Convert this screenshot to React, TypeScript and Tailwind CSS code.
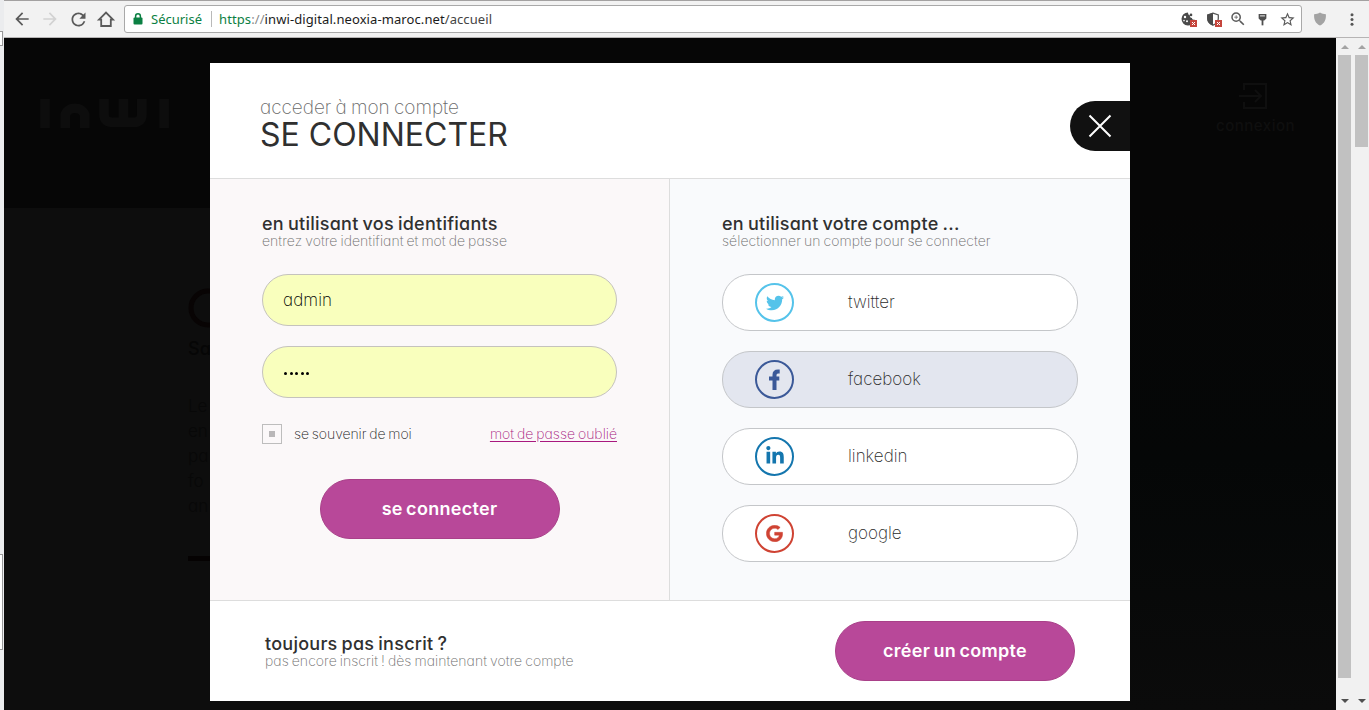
import type { ReactNode } from "react";
import { MdArrowBack, MdArrowForward, MdRefresh, MdStarBorder, MdZoomIn } from "react-icons/md";
import { FaGoogle, FaLinkedinIn, FaTwitter } from "react-icons/fa";

function BlockedBadge() {
  return (
    <svg className="absolute -right-[2px] -bottom-[1px] h-[7px] w-[7px]" viewBox="0 0 7 7">
      <rect width="7" height="7" fill="#c5453c" />
      <path d="M2 2l3 3M5 2l-3 3" stroke="#fff" strokeWidth="1" />
    </svg>
  );
}

function BrowserBar() {
  return (
    <header className="flex h-[38px] shrink-0 items-center border-t border-b border-t-[#a3a1a1] border-b-[#b6b4b4] bg-[#f2f2f2] pl-[8px]">
      <div className="flex items-center gap-[8px] text-[#5a5a5a]">
        <MdArrowBack className="h-5 w-5" />
        <MdArrowForward className="h-5 w-5 text-[#d2d2d2]" />
        <MdRefresh className="h-[21px] w-[21px]" />
        <svg className="-ml-[1px] h-5 w-5" viewBox="0 0 20 20" fill="none" stroke="currentColor" strokeWidth="1.8">
          <path d="M3 10.600 10 3.600l7 7h-2.200V17H5.200v-6.400z" strokeLinejoin="miter" />
        </svg>
      </div>
      <div className="ml-[8px] flex h-[28px] w-[1178px] shrink-0 items-center rounded-[3px] border border-[#a9a9a9] bg-white pr-px pl-[8px] font-['Noto_Sans',sans-serif] text-[13px]">
        <svg className="h-3 w-[10px]" viewBox="0 0 10 12">
          <rect x="0.5" y="4.5" width="9" height="7" rx="1" fill="#0b8043" />
          <path d="M2.600 5V3.200a2.400 2.400 0 0 1 4.800 0V5" fill="none" stroke="#0b8043" strokeWidth="1.5" />
        </svg>
        <span className="ml-[8px] pt-px text-[#0b8043]">Sécurisé</span>
        <span className="ml-[9px] h-4 w-px bg-[#b9b9b9]" />
        <span className="ml-[7px] pt-px tracking-[0.09px] whitespace-nowrap text-[#1b1b1b]">
          <span className="text-[#0b8043]">https</span>
          <span className="text-[#8a8a8a]">://</span>inwi-digital.neoxia-maroc.net<span className="text-[#444]">/accueil</span>
        </span>
        <div className="ml-auto grid grid-cols-[repeat(5,25px)] place-items-center text-[#5a5a5a]">
          <span className="relative h-[14px] w-[14px]">
            <svg className="h-[14px] w-[14px]" viewBox="0 0 14 14">
              <path d="M7 .5a6.500 6.500 0 1 0 6.500 7C12 8 11 7.300 11 6 9.500 6 8.500 5 9 3.500 7.600 3 7 2 7 .5z" fill="#4a4a4a" />
              <circle cx="10" cy="2.900" r="1.300" fill="#4a4a4a" />
              <circle cx="4" cy="5" r="1.200" fill="#fff" />
              <circle cx="6" cy="9.200" r="1" fill="#fff" />
              <circle cx="3" cy="8.600" r=".8" fill="#fff" />
            </svg>
            <BlockedBadge />
          </span>
          <span className="relative h-[14px] w-[14px]">
            <svg className="h-[14px] w-[14px]" viewBox="0 0 14 14">
              <path d="M7 1.200 12.300 3v3.600c0 3-2.200 5.400-5.300 6.600-3.100-1.200-5.300-3.600-5.300-6.600V3z" fill="none" stroke="#5a5a5a" strokeWidth="1.300" />
              <path d="M7 .8 1.200 2.800v3.800c0 3.300 2.400 5.800 5.800 7z" fill="#4a4a4a" />
            </svg>
            <BlockedBadge />
          </span>
          <MdZoomIn className="h-[18px] w-[18px]" />
          <svg className="h-[13px] w-[9px]" viewBox="0 0 10 14">
            <path d="M.7 1h8.600v5L7 8H3L.7 6z" fill="#4f4f4f" />
            <path d="M2.300 3h5.400" stroke="#fff" strokeWidth="1" />
            <path d="M5 7.500v6" stroke="#4f4f4f" strokeWidth="2" />
          </svg>
          <MdStarBorder className="h-[17px] w-[17px]" />
        </div>
      </div>
      <svg className="ml-[11px] h-[14px] w-[14px]" viewBox="0 0 14 15">
        <path d="M7 .5c1.800 1.200 4 1.700 6.300 1.800C13.700 8 12 12 7 14.500 2 12 .3 8 .7 2.300 3 2.200 5.200 1.700 7 .5z" fill="#a3a3a3" />
      </svg>
      <svg className="ml-[22px] h-[15px] w-[6px]" viewBox="0 0 6 15" fill="#555">
        <circle cx="3" cy="2.700" r="1.500" />
        <circle cx="3" cy="7.500" r="1.500" />
        <circle cx="3" cy="12.300" r="1.500" />
      </svg>
    </header>
  );
}

function Arrow({ down = false }: { down?: boolean }) {
  return (
    <svg className="h-[4px] w-[8px] shrink-0" viewBox="0 0 8 4">
      <path d={down ? "M0 0h8L4 4z" : "M0 4h8L4 0z"} fill={down ? "#505050" : "#a3a3a3"} />
    </svg>
  );
}

function Scrollbars() {
  return (
    <div className="flex w-[33px] shrink-0 gap-[4px] bg-[#f1f1f1] pl-[2px]">
      <div className="flex w-[13px] flex-col items-center pt-[7px] pb-[7px]">
        <Arrow />
        <div className="mt-[6px] mb-auto h-[623px] w-[13px] shrink-0 bg-[#c1c1c1]" />
        <Arrow down />
      </div>
      <div className="flex w-[13px] flex-col items-center pt-[7px] pb-[7px]">
        <Arrow />
        <div className="mt-[6px] mb-auto h-[92px] w-[13px] shrink-0 bg-[#c1c1c1]" />
        <Arrow down />
      </div>
    </div>
  );
}

function PageBehind() {
  return (
    <div className="flex h-full flex-col bg-[#060606]">
      <div className="flex h-[170px] shrink-0 items-start justify-between pt-[45px] pr-[41px] pl-[33px]">
        <svg className="mt-[15px] h-[31px] w-[136px]" viewBox="0 0 136 32" fill="none" stroke="#0d0d0d" strokeWidth="10">
          <path d="M6 1v30M27 31V17a11 11 0 0 1 20 0v14M67 1v16q0 8 9 8h22q8 0 8-8V1M87 1v22M129 1v30" />
        </svg>
        <div className="flex flex-col items-center text-[#0f0f0f]">
          <svg className="h-[26px] w-[36px]" viewBox="0 0 36 26" fill="none" stroke="currentColor" strokeWidth="2">
            <path d="M6 7V1h22v24H6v-6M1 13h22M17 7l6 6-6 6" />
          </svg>
          <span className="mt-[7px] text-[15px] leading-[20px] font-medium tracking-[0.5px]">connexion</span>
        </div>
      </div>
      <div className="flex grow bg-[#0d0d0d]">
        <div className="flex w-[206px] flex-col overflow-hidden pt-[80px] pl-[184px] whitespace-nowrap text-[#060606]">
          <svg className="h-[40px] w-[40px] shrink-0" viewBox="0 0 40 40" fill="none" stroke="#080404" strokeWidth="5">
            <circle cx="20" cy="20" r="17" />
          </svg>
          <span className="mt-[10px] text-[18px] leading-[22px] font-medium">Sa</span>
          <p className="mt-[34px] text-[17px] leading-[25px] font-light text-[#080808]">
            Le
            <br />
            en
            <br />
            pa
            <br />
            fo
            <br />
            an
          </p>
          <span className="mt-[37px] h-[5px] w-[60px] shrink-0 bg-[#050202]" />
        </div>
        <div className="ml-[920px] grow bg-linear-to-b from-[#060606] via-[#050707] to-[#0b0b0b]" />
      </div>
    </div>
  );
}

function SectionTitle({ title, children }: { title: string; children: ReactNode }) {
  return (
    <div>
      <h2 className="text-[18px] leading-[20px] font-medium tracking-[0.25px] text-[#303030] [word-spacing:-1px]">{title}</h2>
      <p className="-mt-px mb-px text-[14px] leading-[16px] font-extralight tracking-[0.05px] text-[#6f6f6f] [word-spacing:-1px]">
        {children}
      </p>
    </div>
  );
}

function PinkButton({ children }: { children: ReactNode }) {
  return (
    <button className="h-[60px] w-[240px] shrink-0 rounded-[30px] border border-[#a94089] bg-[#b84899] pb-[1px] text-[18px] font-semibold tracking-[0.3px] text-white [word-spacing:-1.5px]">
      {children}
    </button>
  );
}

function CredentialsPanel() {
  return (
    <section className="flex w-[460px] flex-col border-r border-[#dddddd] bg-[#fbf8f9] pt-[35px] pr-[52px] pl-[52px]">
      <SectionTitle title="en utilisant vos identifiants">entrez votre identifiant et mot de passe</SectionTitle>
      <div className="mt-6 flex h-[52px] items-center rounded-[26px] border border-[#c5c3bd] bg-[#f9ffbd] px-[20px] pt-[2px] text-[17px] font-extralight tracking-[0.1px] text-black">
        admin
      </div>
      <div className="mt-5 flex h-[52px] items-center gap-[2.5px] rounded-[26px] border border-[#c5c3bd] bg-[#f9ffbd] px-[21px]">
        {[0, 1, 2, 3, 4].map((dot) => (
          <span key={dot} className="mt-[2px] h-[3px] w-[3px] rounded-full bg-black" />
        ))}
      </div>
      <div className="mt-[26px] flex h-5 items-center text-[14px] font-extralight [word-spacing:-1px]">
        <span className="flex h-5 w-5 items-center justify-center border border-[#bdbdbd]">
          <span className="h-[6px] w-[6px] bg-[#b9b7b8]" />
        </span>
        <span className="ml-[12px] pb-[2px] tracking-[-0.07px] text-[#222]">se souvenir de moi</span>
        <a className="ml-auto pb-[2px] text-[#a8187f] underline underline-offset-[2px]">mot de passe oublié</a>
      </div>
      <div className="mt-[35px] flex justify-center">
        <PinkButton>se connecter</PinkButton>
      </div>
    </section>
  );
}

function Provider({ label, tone, fill, icon }: { label: string; tone: string; fill: string; icon: ReactNode }) {
  return (
    <button className={`flex h-[57px] w-[356px] items-center rounded-[28px] border border-[#c4c6c9] pl-[32px] ${fill}`}>
      <span className={`flex h-[39px] w-[39px] items-center justify-center rounded-full border-2 ${tone}`}>{icon}</span>
      <span className="ml-[54px] text-[17px] font-extralight text-[#2c2c2c]">{label}</span>
    </button>
  );
}

function ProvidersPanel() {
  return (
    <section className="flex w-[460px] flex-col bg-[#f9fafc] pt-[35px] pl-[52px]">
      <SectionTitle title="en utilisant votre compte ...">sélectionner un compte pour se connecter</SectionTitle>
      <div className="mt-6 flex flex-col gap-5">
        <Provider label="twitter" tone="border-[#55c3ea] text-[#55c3ea]" fill="bg-white" icon={<FaTwitter className="ml-[1px] h-[18px] w-[18px]" />} />
        <Provider
          label="facebook"
          tone="border-[#3b5998] text-[#3b5998]"
          fill="bg-[#e3e6ef]"
          icon={
            <svg className="h-[21px] w-[11px]" viewBox="0 0 11 21" fill="none" stroke="currentColor" strokeWidth="4">
              <path d="M5.500 21V6q0-3.500 3.500-3.500h1.700M0 9.500h10.300" />
            </svg>
          }
        />
        <Provider label="linkedin" tone="border-[#1476ae] text-[#1476ae]" fill="bg-white" icon={<FaLinkedinIn className="mb-[2px] h-[20px] w-[20px]" />} />
        <Provider label="google" tone="border-[#cf4333] text-[#cf4333]" fill="bg-white" icon={<FaGoogle className="h-[17px] w-[17px] stroke-current stroke-[14]" />} />
      </div>
    </section>
  );
}

function LoginDialog() {
  return (
    <div className="absolute top-[25px] left-[206px] flex h-[638px] w-[920px] flex-col bg-white">
      <header className="flex h-[116px] shrink-0 items-start justify-between border-b border-[#dddddd] pl-[50px]">
        <div className="pt-[36px]">
          <p className="text-[19px] leading-[18px] font-extralight tracking-[-0.05px] text-[#6b6b6b] [word-spacing:-1px]">
            acceder à mon compte
          </p>
          <h1 className="mt-px text-[32px] leading-[34px] font-normal text-[#303030]">SE CONNECTER</h1>
        </div>
        <button className="mt-[38px] flex h-[50px] w-[60px] items-center justify-center rounded-l-[25px] bg-[#111]">
          <svg className="h-[24px] w-[24px]" viewBox="0 0 24 24" stroke="#fff" strokeWidth="2">
            <path d="M1.500 1.500l21 21M22.500 1.500l-21 21" />
          </svg>
        </button>
      </header>
      <div className="flex h-[421px] shrink-0">
        <CredentialsPanel />
        <ProvidersPanel />
      </div>
      <footer className="flex grow items-start justify-between border-t border-[#dddddd] pt-[20px] pr-[55px] pl-[55px]">
        <div className="pt-[13px]">
          <SectionTitle title="toujours pas inscrit ?">pas encore inscrit ! dès maintenant votre compte</SectionTitle>
        </div>
        <PinkButton>créer un compte</PinkButton>
      </footer>
    </div>
  );
}

export default function App() {
  return (
    <div className="flex h-[710px] w-[1369px] overflow-hidden bg-white font-['Inter',sans-serif] [font-feature-settings:'cv11']">
      <aside className="flex w-[4px] shrink-0 flex-col bg-[#ebecee] pt-[31px]">
        <div className="h-[15px] w-[3px] border-y border-r border-[#999] bg-white" />
        <div className="mt-[508px] h-[96px] w-[3px] border-y border-r border-[#999] bg-white" />
      </aside>
      <div className="flex w-[1365px] flex-col">
        <BrowserBar />
        <div className="flex h-[672px]">
          <main className="relative w-[1332px]">
            <PageBehind />
            <LoginDialog />
          </main>
          <Scrollbars />
        </div>
      </div>
    </div>
  );
}
